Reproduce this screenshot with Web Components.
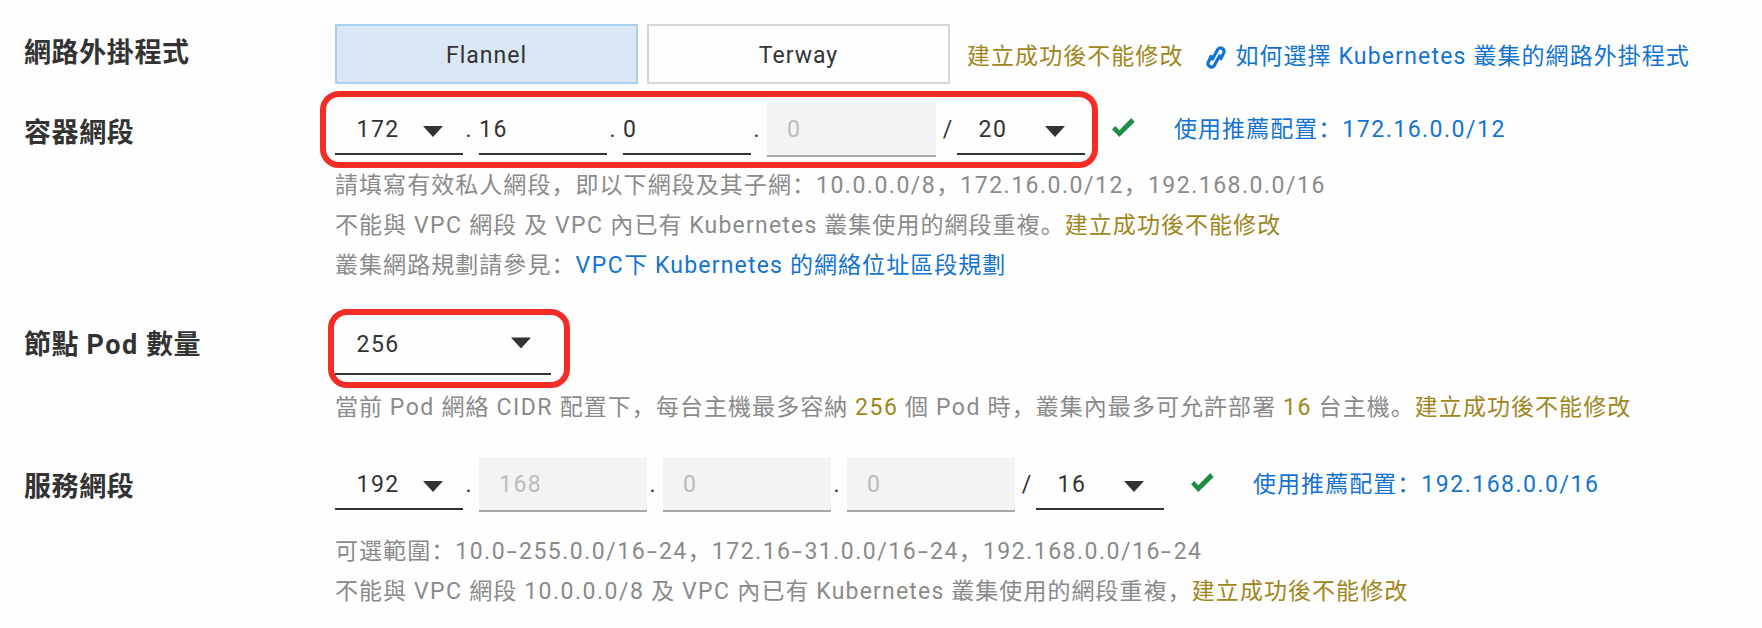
<!DOCTYPE html>
<html lang="zh-Hans">
<head>
<meta charset="utf-8">
<title>網路配置</title>
<style>
  body {
    margin: 0;
    background: #fefefe;
    color: #333;
    font-family: Roboto, "Noto Sans CJK SC", sans-serif;
    font-size: 23px;
    letter-spacing: 1.05px;
  }
  main { display: block; padding: 24px 0 0 24px; }
  .gold { color: #a0861c; }
  .blue { color: #1273d2; }
  /* latin runs sit a little wider than the CJK text around them */
  .n { letter-spacing: 1.5px; }
  .k { letter-spacing: 1.2px; }
  /* the hyphen of the reference font is much wider than Roboto's */
  .h { display: inline-block; margin: 0 2.5px; transform: scaleX(1.6); }
</style>
</head>
<body>
<main>
  <form-row style="--label-top: 9px;">
    <span slot="label">網路外掛程式</span>
    <seg-button active>Flannel</seg-button>
    <seg-button style="margin-left: 9px;">Terway</seg-button>
    <plain-note class="gold" style="margin-left: 17px; --note-top: 13px;">建立成功後不能修改</plain-note>
    <help-link icon style="margin-left: 23px; --note-top: 13px;">如何選擇 <span class="k">Kubernetes</span> 叢集的網路外掛程式</help-link>
  </form-row>

  <form-row style="margin-top: 19px; --label-top: 10px;">
    <span slot="label">容器網段</span>
    <ring-mark style="--l: -15px; --r: -13px; --t: -12px; --b: -11px;">
      <ip-select style="--w: 128px;">172</ip-select>
      <ip-sep>.</ip-sep>
      <ip-field>16</ip-field>
      <ip-sep>.</ip-sep>
      <ip-field>0</ip-field>
      <ip-sep>.</ip-sep>
      <ip-field disabled style="--w: 169px;">0</ip-field>
      <ip-sep wide>/</ip-sep>
      <ip-select style="--w: 128px;">20</ip-select>
    </ring-mark>
    <check-mark style="margin-left: 27px;"></check-mark>
    <help-link style="margin-left: 39px;">使用推薦配置：<span class="n">172.16.0.0/12</span></help-link>
  </form-row>
  <help-text style="margin-top: 9px;">
    <div>請填寫有效私人網段，即以下網段及其子網：<span class="n">10.0.0.0/8</span>，<span class="n">172.16.0.0/12</span>，<span class="n">192.168.0.0/16</span></div>
    <div>不能與 <span class="n">VPC</span> 網段 及 <span class="n">VPC</span> 內已有 <span class="k">Kubernetes</span> 叢集使用的網段重複。<span class="gold">建立成功後不能修改</span></div>
    <div>叢集網路規劃請參見：<span class="blue"><span class="n">VPC</span>下 <span class="k">Kubernetes</span> 的網絡位址區段規劃</span></div>
  </help-text>

  <form-row style="margin-top: 27px; --label-top: 12px;">
    <span slot="label">節點 <span class="n">Pod</span> 數量</span>
    <ring-mark style="--l: -7px; --r: -19px; --t: -4px; --b: -13px;">
      <ip-select style="--w: 216px; --h: 62px; --pad-top: 3px; --arrow-shift: -3.5px;">256</ip-select>
    </ring-mark>
  </form-row>
  <help-text style="margin-top: 13px;">
    <div>當前 <span class="n">Pod</span> 網絡 <span class="n">CIDR</span> 配置下，每台主機最多容納 <span class="gold n">256</span> 個 <span class="n">Pod</span> 時，叢集內最多可允許部署 <span class="gold n">16</span> 台主機。<span class="gold">建立成功後不能修改</span></div>
  </help-text>

  <form-row style="margin-top: 30px; --label-top: 9px;">
    <span slot="label">服務網段</span>
    <ip-select style="--w: 128px;">192</ip-select>
    <ip-sep>.</ip-sep>
    <ip-field disabled style="--w: 168px;">168</ip-field>
    <ip-sep>.</ip-sep>
    <ip-field disabled style="--w: 168px;">0</ip-field>
    <ip-sep>.</ip-sep>
    <ip-field disabled style="--w: 168px;">0</ip-field>
    <ip-sep wide>/</ip-sep>
    <ip-select style="--w: 128px;">16</ip-select>
    <check-mark style="margin-left: 27px;"></check-mark>
    <help-link style="margin-left: 39px;">使用推薦配置：<span class="n">192.168.0.0/16</span></help-link>
  </form-row>
  <help-text style="margin-top: 20px;">
    <div>可選範圍：<span class="n">10.0<span class="h">-</span>255.0.0/16<span class="h">-</span>24</span>，<span class="n">172.16<span class="h">-</span>31.0.0/16<span class="h">-</span>24</span>，<span class="n">192.168.0.0/16<span class="h">-</span>24</span></div>
    <div>不能與 <span class="n">VPC</span> 網段 <span class="n">10.0.0.0/8</span> 及 <span class="n">VPC</span> 內已有 <span class="k">Kubernetes</span> 叢集使用的網段重複，<span class="gold">建立成功後不能修改</span></div>
  </help-text>
</main>

<script>
  // small helper so every element gets an open shadow root from a string
  class BaseElement extends HTMLElement {
    constructor() {
      super();
      this.attachShadow({ mode: "open" });
    }
    connectedCallback() {
      this.shadowRoot.innerHTML = this.render();
    }
  }

  // label column on the left, controls on the right
  class FormRow extends BaseElement {
    render() {
      return `
        <style>
          :host { display: flex; align-items: flex-start; }
          .label {
            width: 311px;
            flex: none;
            padding-top: var(--label-top, 8px);
            font-size: 27px;
            font-weight: 700;
            line-height: 40px;
            letter-spacing: 0.6px;
            color: #333;
          }
          .controls { display: flex; align-items: flex-start; }
        </style>
        <div class="label"><slot name="label"></slot></div>
        <div class="controls"><slot></slot></div>
      `;
    }
  }

  class SegButton extends BaseElement {
    render() {
      const active = this.hasAttribute("active");
      return `
        <style>
          :host {
            display: flex;
            align-items: center;
            justify-content: center;
            box-sizing: border-box;
            width: 303px;
            height: 60px;
            padding-top: 2px;
            border: 2px solid ${active ? "#a9cfee" : "#d6d6d6"};
            background: ${active ? "#dae7f6" : "#fefefe"};
            color: #333;
            letter-spacing: 1px;
          }
        </style>
        <slot></slot>
      `;
    }
  }

  class PlainNote extends BaseElement {
    render() {
      return `
        <style>
          :host { display: block; padding-top: var(--note-top, 7px); line-height: 40px; white-space: nowrap; }
        </style>
        <slot></slot>
      `;
    }
  }

  class HelpLink extends BaseElement {
    render() {
      const icon = this.hasAttribute("icon")
        ? `<svg width="20" height="25" viewBox="0 0 20 25" fill="none" stroke="currentColor" stroke-width="3.2" stroke-linecap="round" stroke-linejoin="round">
             <path d="M6.5 14 11.7 4.4a3.5 3.5 0 0 1 6 3.5L15 13.5" />
             <path d="M13.5 11 8.3 20.6a3.5 3.5 0 0 1-6-3.5L5 11.5" />
           </svg>`
        : "";
      return `
        <style>
          :host {
            display: flex;
            align-items: center;
            gap: 9px;
            padding-top: var(--note-top, 7px);
            line-height: 40px;
            white-space: nowrap;
            color: #1273d2;
          }
          svg { flex: none; }
        </style>
        ${icon}<span><slot></slot></span>
      `;
    }
  }

  class IpSelect extends BaseElement {
    render() {
      return `
        <style>
          :host {
            display: flex;
            align-items: center;
            justify-content: space-between;
            box-sizing: border-box;
            width: var(--w, 128px);
            height: var(--h, 52px);
            padding: var(--pad-top, 2px) 20px 0 21.5px;
            border-bottom: 2px solid #333;
            color: #333;
            letter-spacing: 1.5px;
          }
          i {
            width: 0;
            height: 0;
            border-left: 10.5px solid transparent;
            border-right: 10.5px solid transparent;
            border-top: 11px solid #333;
            transform: translateY(calc(2px + var(--arrow-shift, 0px)));
          }
        </style>
        <span><slot></slot></span><i></i>
      `;
    }
  }

  class IpField extends BaseElement {
    render() {
      const disabled = this.hasAttribute("disabled");
      return `
        <style>
          :host {
            display: flex;
            align-items: center;
            box-sizing: border-box;
            width: var(--w, 128px);
            height: ${disabled ? 54 : 52}px;
            padding: ${disabled ? "0 0 0 20px" : "2px 0 0"};
            border-bottom: 2px solid ${disabled ? "#a9a9a9" : "#333"};
            background: ${disabled ? "#f3f3f3" : "transparent"};
            color: ${disabled ? "#bbb" : "#333"};
            letter-spacing: 1.5px;
          }
        </style>
        <slot></slot>
      `;
    }
  }

  // the . and / between the address parts
  class IpSep extends BaseElement {
    render() {
      const wide = this.hasAttribute("wide");
      return `
        <style>
          :host {
            display: block;
            box-sizing: border-box;
            width: ${wide ? 21 : 16}px;
            height: 52px;
            padding: ${wide ? "0 0 0 2px" : "0 5px 0 0"};
            line-height: 54px;
            text-align: center;
            letter-spacing: 0;
            color: #333;
          }
        </style>
        <slot></slot>
      `;
    }
  }

  // the red hand-drawn rectangle lies over the form
  class RingMark extends BaseElement {
    render() {
      return `
        <style>
          :host { display: flex; align-items: flex-start; position: relative; }
          .ring {
            position: absolute;
            left: var(--l);
            right: var(--r);
            top: var(--t);
            bottom: var(--b);
            border: 6px solid #f42c26;
            border-radius: 19px;
            pointer-events: none;
          }
        </style>
        <slot></slot>
        <div class="ring"></div>
      `;
    }
  }

  class CheckMark extends BaseElement {
    render() {
      return `
        <style>
          :host { display: block; padding-top: 15px; line-height: 0; }
        </style>
        <svg width="23" height="19" viewBox="0 0 23 19" fill="#1e8c45">
          <path d="M0 11.3 3.3 8 7.3 12.3 19.3 0 22.6 4 7.3 19z" />
        </svg>
      `;
    }
  }

  class HelpText extends BaseElement {
    render() {
      return `
        <style>
          :host { display: block; margin-left: 311px; line-height: 40px; color: #8a8a8a; white-space: nowrap; }
        </style>
        <slot></slot>
      `;
    }
  }

  customElements.define("form-row", FormRow);
  customElements.define("seg-button", SegButton);
  customElements.define("plain-note", PlainNote);
  customElements.define("help-link", HelpLink);
  customElements.define("ip-select", IpSelect);
  customElements.define("ip-field", IpField);
  customElements.define("ip-sep", IpSep);
  customElements.define("ring-mark", RingMark);
  customElements.define("check-mark", CheckMark);
  customElements.define("help-text", HelpText);
</script>
</body>
</html>
